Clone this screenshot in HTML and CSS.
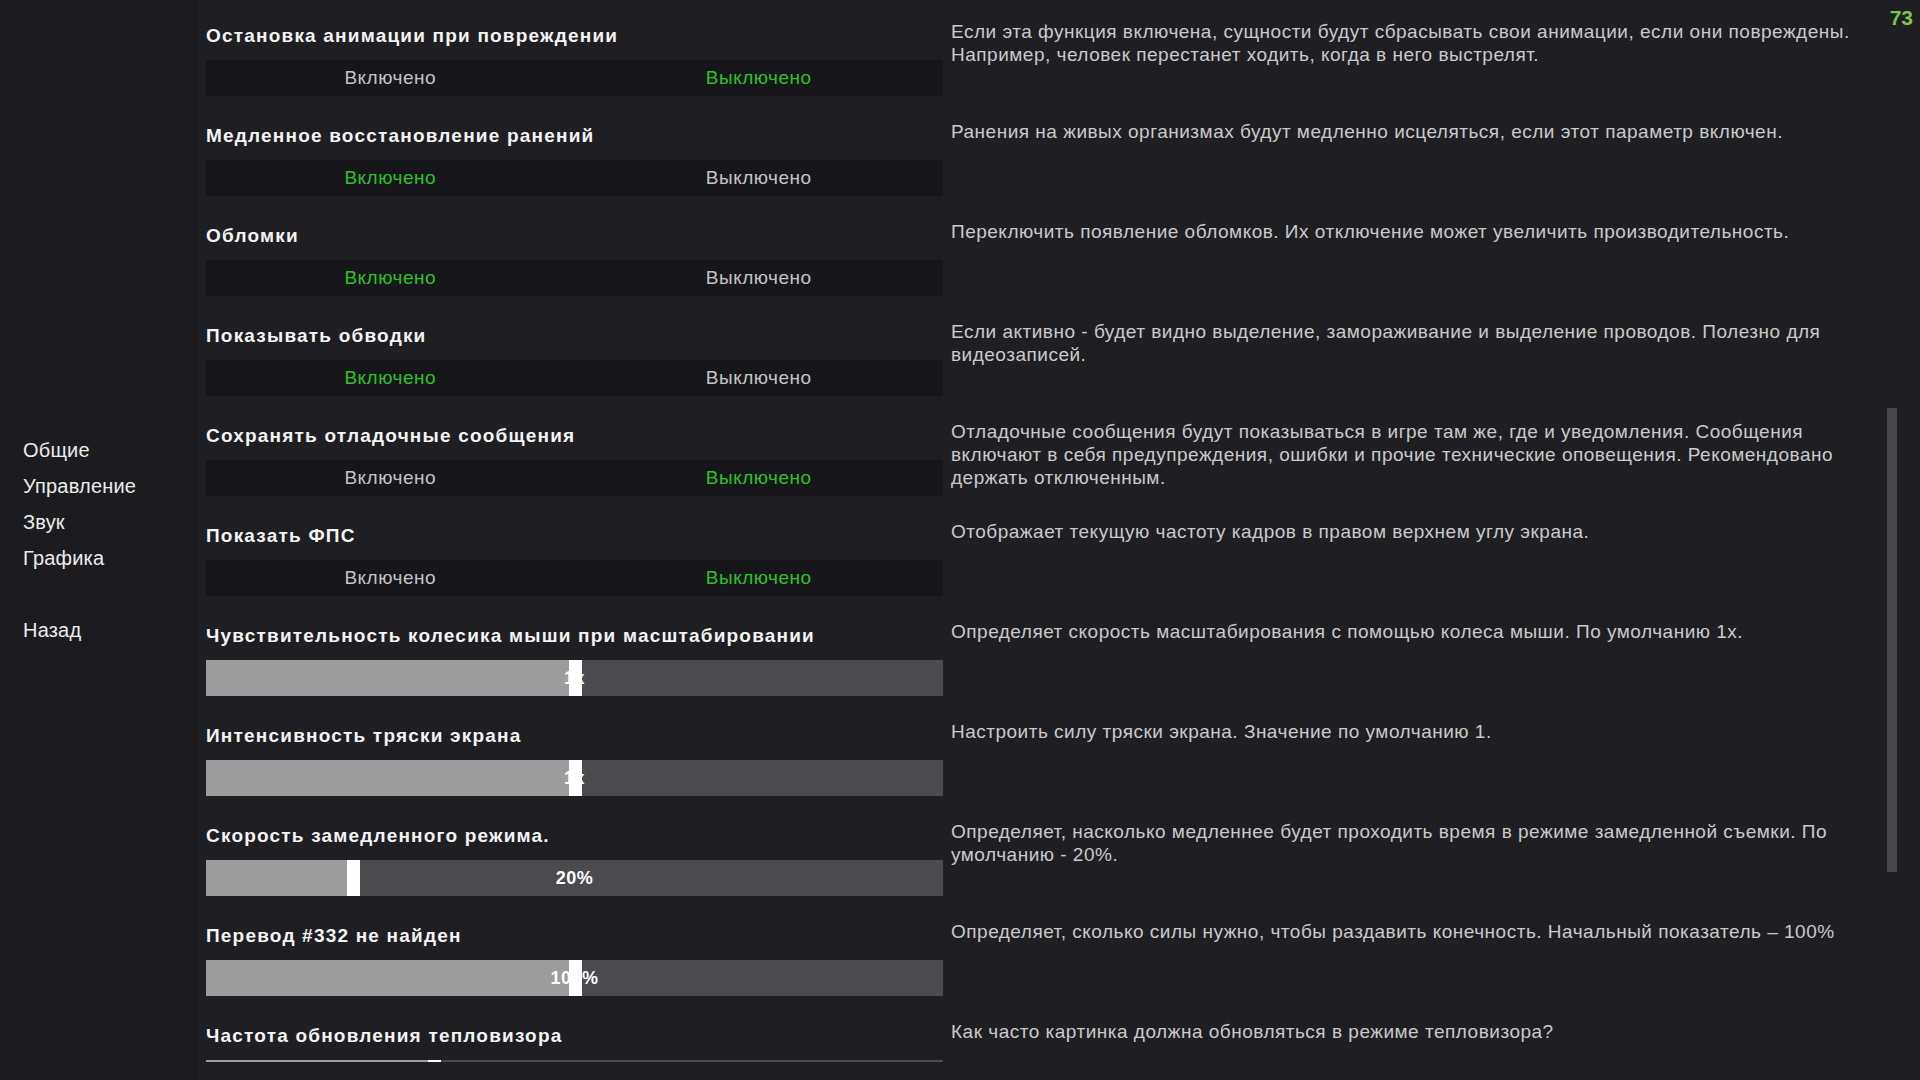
FILE: index.html
```html
<!DOCTYPE html>
<html lang="ru">
	<head>
		<title>Настройки</title>
		<meta charset="utf-8">
		<link rel="stylesheet" href="styles.css">
	</head>
	<body>
		<div id="view">
			<div id="nav">
				<a class="nav-item">Общие</a>
				<a class="nav-item">Управление</a>
				<a class="nav-item">Звук</a>
				<a class="nav-item">Графика</a>
				<a class="nav-item back">Назад</a>
			</div>
			<div id="settings">
				<div class="row">
					<div class="control">
						<h2 class="title">Остановка анимации при повреждении</h2>
						<div class="toggle"><span class="opt">Включено</span><span class="opt on">Выключено</span></div>
					</div>
					<p class="desc">Если эта функция включена, сущности будут сбрасывать свои анимации, если они повреждены. Например, человек перестанет ходить, когда в него выстрелят.</p>
				</div>
				<div class="row">
					<div class="control">
						<h2 class="title">Медленное восстановление ранений</h2>
						<div class="toggle"><span class="opt on">Включено</span><span class="opt">Выключено</span></div>
					</div>
					<p class="desc">Ранения на живых организмах будут медленно исцеляться, если этот параметр включен.</p>
				</div>
				<div class="row">
					<div class="control">
						<h2 class="title">Обломки</h2>
						<div class="toggle"><span class="opt on">Включено</span><span class="opt">Выключено</span></div>
					</div>
					<p class="desc">Переключить появление обломков. Их отключение может увеличить производительность.</p>
				</div>
				<div class="row">
					<div class="control">
						<h2 class="title">Показывать обводки</h2>
						<div class="toggle"><span class="opt on">Включено</span><span class="opt">Выключено</span></div>
					</div>
					<p class="desc">Если активно - будет видно выделение, замораживание и выделение проводов. Полезно для видеозаписей.</p>
				</div>
				<div class="row">
					<div class="control">
						<h2 class="title">Сохранять отладочные сообщения</h2>
						<div class="toggle"><span class="opt">Включено</span><span class="opt on">Выключено</span></div>
					</div>
					<p class="desc">Отладочные сообщения будут показываться в игре там же, где и уведомления. Сообщения включают в себя предупреждения, ошибки и прочие технические оповещения. Рекомендовано держать отключенным.</p>
				</div>
				<div class="row">
					<div class="control">
						<h2 class="title">Показать ФПС</h2>
						<div class="toggle"><span class="opt">Включено</span><span class="opt on">Выключено</span></div>
					</div>
					<p class="desc">Отображает текущую частоту кадров в правом верхнем углу экрана.</p>
				</div>
				<div class="row">
					<div class="control">
						<h2 class="title">Чувствительность колесика мыши при масштабировании</h2>
						<div class="slider">
							<div class="fill" style="width: 50%"></div>
							<span class="value">1x</span>
							<div class="handle" style="left: 50%"></div>
						</div>
					</div>
					<p class="desc">Определяет скорость масштабирования с помощью колеса мыши. По умолчанию 1x.</p>
				</div>
				<div class="row">
					<div class="control">
						<h2 class="title">Интенсивность тряски экрана</h2>
						<div class="slider">
							<div class="fill" style="width: 50%"></div>
							<span class="value">1x</span>
							<div class="handle" style="left: 50%"></div>
						</div>
					</div>
					<p class="desc">Настроить силу тряски экрана. Значение по умолчанию 1.</p>
				</div>
				<div class="row">
					<div class="control">
						<h2 class="title">Скорость замедленного режима.</h2>
						<div class="slider">
							<div class="fill" style="width: 20%"></div>
							<span class="value">20%</span>
							<div class="handle" style="left: 20%"></div>
						</div>
					</div>
					<p class="desc">Определяет, насколько медленнее будет проходить время в режиме замедленной съемки. По умолчанию - 20%.</p>
				</div>
				<div class="row">
					<div class="control">
						<h2 class="title">Перевод #332 не найден</h2>
						<div class="slider">
							<div class="fill" style="width: 50%"></div>
							<span class="value">100%</span>
							<div class="handle" style="left: 50%"></div>
						</div>
					</div>
					<p class="desc">Определяет, сколько силы нужно, чтобы раздавить конечность. Начальный показатель – 100%</p>
				</div>
				<div class="row">
					<div class="control">
						<h2 class="title">Частота обновления тепловизора</h2>
						<div class="slider">
							<div class="fill" style="width: 31%"></div>
							<div class="handle" style="left: 31%"></div>
						</div>
					</div>
					<p class="desc">Как часто картинка должна обновляться в режиме тепловизора?</p>
				</div>
			</div>
			<div id="scrollbar"><div class="thumb"></div></div>
		</div>
		<div id="fps">73</div>
	</body>
</html>
```
FILE: styles.css
```css
html {
	height: 100%;
}
body {
	margin: 0;
	height: 100%;
	background-color: #1f1f23;
	color: #cacaca;
	font-family: 'Liberation Sans', Arial, sans-serif;
	font-size: 19px;
	cursor: default;
	overflow: hidden;
}

#view {
	display: flex;
	width: 100%;
	height: 100%;
}
#nav {
	flex: 0 0 198px;
	display: flex;
	flex-direction: column;
	justify-content: center;
	padding-left: 23px;
	box-sizing: border-box;
	background-color: #1c1c20;
}
.nav-item {
	display: block;
	height: 36px;
	line-height: 36px;
	color: #ececec;
	font-size: 20px;
	letter-spacing: 0.2px;
}
.nav-item.back {
	margin-top: 36px;
}

#settings {
	flex: 1 1 auto;
	height: 1062px;
	overflow: hidden;
	padding-left: 8px;
}
.row {
	display: flex;
	height: 100px;
	box-sizing: border-box;
	gap: 8px;
}
.control {
	flex: 0 0 737px;
	padding-top: 24px;
}
.title {
	margin: 0;
	height: 24px;
	line-height: 24px;
	font-size: 19px;
	font-weight: 700;
	letter-spacing: 1.2px;
	color: #f4f4f4;
	white-space: nowrap;
}
.toggle {
	display: flex;
	height: 36px;
	margin-top: 12px;
	background-color: #17171b;
}
.opt {
	flex: 1 1 0;
	text-align: center;
	line-height: 36px;
	color: #c4c4c4;
	letter-spacing: 0.5px;
}
.opt.on {
	color: #2fc02a;
}
.slider {
	position: relative;
	height: 36px;
	margin-top: 12px;
	background-color: #4b4b4f;
}
.fill {
	height: 100%;
	background-color: #9c9c9c;
}
.value {
	position: absolute;
	top: 0;
	left: 0;
	right: 0;
	text-align: center;
	line-height: 36px;
	font-size: 18px;
	font-weight: 700;
	letter-spacing: 0.5px;
	color: #ffffff;
}
.handle {
	position: absolute;
	top: 0;
	width: 13px;
	height: 100%;
	margin-left: -6px;
	background-color: #ffffff;
}
.desc {
	flex: 1 1 auto;
	margin: 20px 0 0;
	line-height: 23px;
	letter-spacing: 0.5px;
	color: #cacaca;
}

#scrollbar {
	flex: 0 0 10px;
	margin: 0 23px 0 6px;
}
#scrollbar .thumb {
	margin-top: 408px;
	height: 464px;
	background-color: #48484c;
}

#fps {
	position: absolute;
	top: 6px;
	right: 7px;
	font-size: 21px;
	font-weight: 700;
	color: #7cc44c;
}
```
